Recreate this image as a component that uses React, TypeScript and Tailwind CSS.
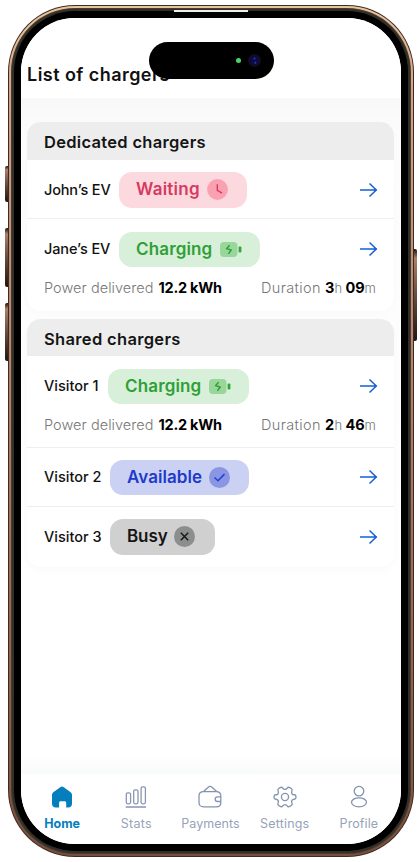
import React from "react";

const sans = "font-['Inter','Liberation_Sans',sans-serif]";

function Arrow() {
  return (
    <svg className="ml-auto h-4 w-[18px] shrink-0" viewBox="0 0 18 16" fill="none" stroke="#1660d6" strokeWidth="1.5">
      <path d="M0 8h17M9.5 1.5 16.3 8l-6.800 6.500" />
    </svg>
  );
}

function ClockIcon() {
  return (
    <svg className="h-[21px] w-[21px] shrink-0" viewBox="0 0 21 21" fill="none">
      <circle cx="10.5" cy="10.5" r="10.4" fill="#f9a0b1" />
      <path d="M10.3 5.3v6l4.7 2.9" stroke="#d93a60" strokeWidth="1.4" />
    </svg>
  );
}

function BatteryIcon() {
  return (
    <svg className="h-[15px] w-[22px] shrink-0" viewBox="0 0 22 15" fill="none">
      <rect width="17.5" height="15" rx="4" fill="#98d69b" />
      <rect x="18.6" y="4.5" width="2.8" height="6" rx="1" fill="#33a63a" />
      <path d="M9.6 3.2 6.5 6.7 11.2 8 8.4 11.8" stroke="#2d9f34" strokeWidth="1.4" strokeLinejoin="round" />
    </svg>
  );
}

function CheckIcon() {
  return (
    <svg className="h-[21px] w-[21px] shrink-0" viewBox="0 0 21 21" fill="none">
      <circle cx="10.5" cy="10.5" r="10.5" fill="#8996e3" />
      <path d="m5.5 10.5 3.500 3.200 6.500-6.600" stroke="#2340cf" strokeWidth="1.5" />
    </svg>
  );
}

function CrossIcon() {
  return (
    <svg className="h-[21px] w-[21px] shrink-0" viewBox="0 0 21 21" fill="none">
      <circle cx="10.5" cy="10.5" r="10.5" fill="#8c8d8d" />
      <path d="m6.800 6.800 7.400 7.400m0-7.400-7.400 7.400" stroke="#151515" strokeWidth="1.4" />
    </svg>
  );
}

type Status = "waiting" | "charging" | "available" | "busy";

const statuses: Record<Status, { label: string; pill: string; text: string; icon: React.ReactNode }> = {
  waiting: { label: "Waiting", pill: "bg-[#fcd9df] text-[#d63a60] w-32", text: "w-[71px] tracking-[0.25px]", icon: <ClockIcon /> },
  charging: { label: "Charging", pill: "bg-[#d8efd9] text-[#2fa036] w-[141px]", text: "w-[83.5px] tracking-[0.15px]", icon: <BatteryIcon /> },
  available: { label: "Available", pill: "bg-[#cbd1f2] text-[#203acb] w-[139px]", text: "w-[81.5px] tracking-[0.05px]", icon: <CheckIcon /> },
  busy: { label: "Busy", pill: "bg-[#d0d0d0] text-[#151515] w-[105px]", text: "w-[47px] tracking-[-0.1px]", icon: <CrossIcon /> },
};

function Row({ name, nameClass, status }: { name: string; nameClass: string; status: Status }) {
  const s = statuses[status];
  return (
    <div className="flex h-[35.5px] items-center pr-4">
      <span className={"shrink-0 text-[14.5px] font-medium whitespace-nowrap text-[#111] " + nameClass}>{name}</span>
      <div className={"flex h-[35.5px] shrink-0 items-center rounded-[13px] pl-[17px] text-[17px] font-semibold " + s.pill}>
        <span className={"shrink-0 whitespace-nowrap " + s.text}>{s.label}</span>
        {s.icon}
      </div>
      <Arrow />
    </div>
  );
}

function Details({ hours, minutes }: { hours: string; minutes: string }) {
  return (
    <div className="flex h-5 items-baseline pr-[18.5px] text-[14.5px] leading-5 whitespace-nowrap">
      <span className="w-[114.5px] font-light tracking-[0.05px] text-[#777]">Power delivered</span>
      <b className="font-bold tracking-[-0.25px] text-black">12.2 kWh</b>
      <span className="ml-auto w-16 font-light tracking-[0.35px] text-[#777]">Duration</span>
      <b className="w-[9.5px] font-bold text-black">{hours}</b>
      <span className="w-[11px] text-[13px] font-light text-[#777]">h</span>
      <b className="w-[19px] font-bold text-black">{minutes}</b>
      <span className="w-[11px] text-[13px] font-light text-[#777]">m</span>
    </div>
  );
}

function HomeIcon() {
  return (
    <svg className="h-6 w-6" viewBox="0 0 24 24" fill="#057ebd">
      <path d="M10.3 2.2a3 3 0 0 1 3.4 0l6.6 4.7c1.1.8 1.7 1.8 1.7 3v8.6a4 4 0 0 1-4 4h-1.8v-4.8c0-1-.7-1.5-1.6-1.5h-4c-1 0-1.5.6-1.5 1.5v4.8H6a4 4 0 0 1-4-4V9.900c0-1.200.5-2.200 1.600-3z" />
    </svg>
  );
}

function StatsIcon() {
  return (
    <svg className="h-6 w-6" viewBox="0 0 24 24" fill="none" stroke="#8996b0" strokeWidth="1.300">
      <rect x="2.300" y="7.800" width="4.300" height="11" rx="1.500" />
      <rect x="9.700" y="4.800" width="4.300" height="14" rx="1.500" />
      <rect x="17.100" y="1.800" width="4.300" height="17" rx="1.500" />
      <path d="M1.700 22h20.300" />
    </svg>
  );
}

function WalletIcon() {
  return (
    <svg className="h-6 w-6" viewBox="0 0 24 24" fill="none" stroke="#8493af" strokeWidth="1.300">
      <path d="M5.500 6.600h12.800c2.700 0 4.500 1.700 4.500 4.300v6.500c0 2.700-1.800 4.500-4.500 4.500H5.500c-2.700 0-4.500-1.800-4.500-4.500v-6.500c0-2.600 1.800-4.300 4.500-4.300Z" />
      <path d="m5.500 6.600 4.500-4.200c1.300-1.200 2.900-1.200 4.200 0l4.500 4.200M22.800 11.900h-3.300a2.300 2.300 0 0 0 0 4.600h3.300" />
    </svg>
  );
}

function GearIcon() {
  return (
    <svg className="h-6 w-6" viewBox="-0.5 -0.5 25 25" fill="none" stroke="#8493af" strokeWidth="1.400" strokeLinejoin="round">
      <circle cx="12" cy="12" r="3.700" />
      <path d="M7 2.200c1-.6 2.100-.3 2.700.6 1.100 1.700 3.500 1.700 4.600 0 .6-.9 1.700-1.200 2.700-.6l1.500.9c1 .6 1.200 1.700.7 2.700-1 1.900.2 3.900 2.300 3.900 1.100 0 1.900.7 1.900 1.700v1.200c0 1-.8 1.700-1.900 1.700-2.100 0-3.300 2-2.300 3.900.5 1 .3 2.100-.7 2.700l-1.500.9c-1 .6-2.100.3-2.700-.6-1.100-1.700-3.500-1.700-4.600 0-.6.900-1.700 1.200-2.700.6l-1.500-.9c-1-.6-1.200-1.700-.7-2.700 1-1.900-.2-3.900-2.300-3.900-1.100 0-1.900-.7-1.900-1.700v-1.200c0-1 .8-1.700 1.900-1.700 2.100 0 3.300-2 2.300-3.900-.5-1-.3-2.100.7-2.700z" />
    </svg>
  );
}

function ProfileIcon() {
  return (
    <svg className="h-6 w-6" viewBox="0 0 24 24" fill="none" stroke="#8493af" strokeWidth="1.300">
      <circle cx="12" cy="6.100" r="4.800" />
      <ellipse cx="12" cy="17.300" rx="7.500" ry="4.500" />
    </svg>
  );
}

const tabs = [
  { label: "Home", icon: <HomeIcon />, style: "text-[#057ebd] font-bold" },
  { label: "Stats", icon: <StatsIcon />, style: "text-[#96a3b8] font-normal tracking-[0.3px]" },
  { label: "Payments", icon: <WalletIcon />, style: "text-[#96a3b8] font-normal tracking-[0.05px]" },
  { label: "Settings", icon: <GearIcon />, style: "text-[#96a3b8] font-normal tracking-[0.2px]" },
  { label: "Profile", icon: <ProfileIcon />, style: "text-[#96a3b8] font-normal tracking-[0.1px]" },
];

function Screen() {
  return (
    <div className="flex h-full flex-col overflow-hidden rounded-[54px] bg-white">
      <header className="flex h-20 shrink-0 items-end bg-white pb-[9px] pl-1.5">
        <h1 className="text-[18px] leading-7 font-semibold tracking-[0.45px] whitespace-nowrap text-[#111]">List of chargers</h1>
      </header>
      <main className="flex min-h-0 flex-1 flex-col gap-2 bg-linear-to-b from-[#f8f8f8] via-[#fcfcfc] via-5% to-white to-80% pt-6 pr-[7px] pl-1.5">
        <section className="h-[189px] shrink-0 overflow-hidden rounded-[14px] bg-white shadow-[0_2px_8px_rgba(0,0,0,0.02)]">
          <h2 className="flex h-[38px] items-center bg-[#ededed] pt-[3px] pl-[17px] text-[16.5px] font-semibold tracking-[0.3px] text-[#151515]">Dedicated chargers</h2>
          <div className="h-[59px] border-b border-[#efefef] pt-3 pl-[17px]">
            <Row name="John’s EV" nameClass="w-[75px] tracking-[-0.15px]" status="waiting" />
          </div>
          <div className="pt-[12.5px] pl-[17px]">
            <Row name="Jane’s EV" nameClass="w-[75px] tracking-[-0.1px]" status="charging" />
            <div className="pt-[11px]"><Details hours="3" minutes="09" /></div>
          </div>
        </section>
        <section className="h-[248px] shrink-0 overflow-hidden rounded-[14px] bg-white shadow-[0_3px_8px_rgba(0,0,0,0.025)]">
          <h2 className="flex h-[37px] items-center bg-[#ededed] pt-[3px] pl-[17px] text-[16.5px] font-semibold tracking-[0.33px] text-[#151515]">Shared chargers</h2>
          <div className="h-[92px] border-b border-[#eee] pt-[12.5px] pl-[17px]">
            <Row name="Visitor 1" nameClass="w-16" status="charging" />
            <div className="pt-[11px]"><Details hours="2" minutes="46" /></div>
          </div>
          <div className="h-[59px] border-b border-[#eee] pt-[11.5px] pl-[17px]">
            <Row name="Visitor 2" nameClass="w-[66px]" status="available" />
          </div>
          <div className="pt-3 pl-[17px]">
            <Row name="Visitor 3" nameClass="w-[66px]" status="busy" />
          </div>
        </section>
        <div className="mt-auto -mr-[7px] -ml-1.5 h-5 bg-linear-to-b from-white to-[#f9fafa]" />
      </main>
      <nav className="grid h-[70px] shrink-0 grid-cols-5 bg-white pt-[11px] pr-[5px] pl-1">
        {tabs.map((t) => (
          <div key={t.label} className={"flex flex-col items-center text-[12.5px] " + t.style}>
            {t.icon}
            <span className="pt-[5px] leading-5">{t.label}</span>
          </div>
        ))}
      </nav>
    </div>
  );
}

const sideButton = "absolute bg-linear-to-b from-[#24150f] via-[#a9806a] via-10% to-[#24150f]";

export default function App() {
  return (
    <div className={"relative h-[862px] w-[420px] overflow-hidden bg-white pt-[5px] pl-2 " + sans}>
      <div className={sideButton + " top-[166px] left-[5px] h-9 w-2 rounded-l-xs"} />
      <div className={sideButton + " top-[228px] left-[5px] h-[59px] w-2 rounded-l-xs"} />
      <div className={sideButton + " top-[303px] left-[5px] h-[58px] w-2 rounded-l-xs"} />
      <div className={sideButton + " top-[249px] left-[411px] h-[92px] w-1.5 rounded-r-xs"} />
      <div className="relative h-[852px] w-[406px] rounded-[67px] bg-[#402a20] p-px">
        <div className="h-full rounded-[66px] bg-linear-to-b from-[#e6c89f] via-[#d0a48c] via-10% to-[#76503f] p-[2px]">
          <div className="h-full rounded-[64px] bg-[#50382c] p-px">
            <div className="h-full rounded-[63px] bg-[#30302b] p-[2px]">
              <div className="h-full rounded-[61px] bg-black p-[7px]">
                <Screen />
              </div>
            </div>
          </div>
        </div>
      </div>
      <div className="absolute top-[10px] left-[174px] h-[2px] w-[74px] bg-[#eee]" />
      <div className="absolute top-[42px] left-[149px] flex h-[37px] w-[125px] items-center rounded-full bg-black pl-[87px]">
        <span className="h-[5px] w-[5px] rounded-full bg-[#49d463]" />
        <svg className="ml-[7px] h-[13px] w-[13px]" viewBox="0 0 13 13">
          <circle cx="6.500" cy="6.500" r="6.500" fill="#100d20" />
          <circle cx="6.500" cy="6.500" r="4.500" fill="#0c0a48" />
          <circle cx="6.500" cy="4.500" r="1" fill="#303bb0" />
          <circle cx="7.300" cy="8.800" r="1" fill="#174a82" />
        </svg>
      </div>
    </div>
  );
}
